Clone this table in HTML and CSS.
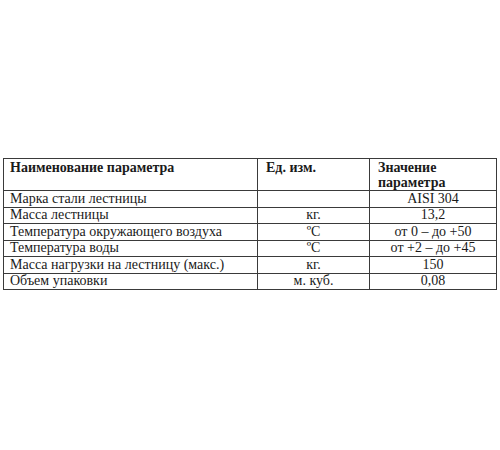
FILE: index.html
```html
<!DOCTYPE html>
<html lang="ru">
<head>
<meta charset="utf-8">
<link rel="stylesheet" href="styles.css">
</head>
<body>
<table class="spec">
  <colgroup>
    <col class="c1"><col class="c2"><col class="c3">
  </colgroup>
  <thead>
    <tr class="head">
      <th>Наименование параметра</th>
      <th>Ед. изм.</th>
      <th>Значение<br>параметра</th>
    </tr>
  </thead>
  <tbody>
    <tr><td>Марка стали лестницы</td><td class="ctr"></td><td class="ctr">AISI 304</td></tr>
    <tr><td>Масса лестницы</td><td class="ctr">кг.</td><td class="ctr">13,2</td></tr>
    <tr><td>Температура окружающего воздуха</td><td class="ctr">ºС</td><td class="ctr">от 0 – до +50</td></tr>
    <tr><td>Температура воды</td><td class="ctr">ºС</td><td class="ctr">от +2 – до +45</td></tr>
    <tr><td>Масса нагрузки на лестницу (макс.)</td><td class="ctr">кг.</td><td class="ctr">150</td></tr>
    <tr><td>Объем упаковки</td><td class="ctr">м. куб.</td><td class="ctr">0,08</td></tr>
  </tbody>
</table>
</body>
</html>
```
FILE: styles.css
```css
html, body {
  margin: 0;
  padding: 0;
  background: #ffffff;
}
body {
  padding: 158px 0 0 3px;
  font-family: "Liberation Serif", "Times New Roman", serif;
  color: #1a1a1a;
}
.spec {
  border-collapse: collapse;
  width: 493px;
  table-layout: fixed;
  font-size: 14px;
  line-height: 14px;
}
.c1 { width: 254px; }
.c2 { width: 112px; }
.c3 { width: 127px; }
.spec th, .spec td {
  border: 1px solid #3a3a3a;
  padding: 0 6px;
  white-space: nowrap;
}
.spec tbody tr { height: 16.5px; }
.spec .head { height: 32px; }
.spec th {
  text-align: left;
  vertical-align: top;
  font-weight: bold;
  line-height: 15px;
  padding: 1px 8px 0;
}
.spec th:first-child { padding-left: 6px; }
.spec td { vertical-align: middle; }
.spec .ctr { text-align: center; }
```
